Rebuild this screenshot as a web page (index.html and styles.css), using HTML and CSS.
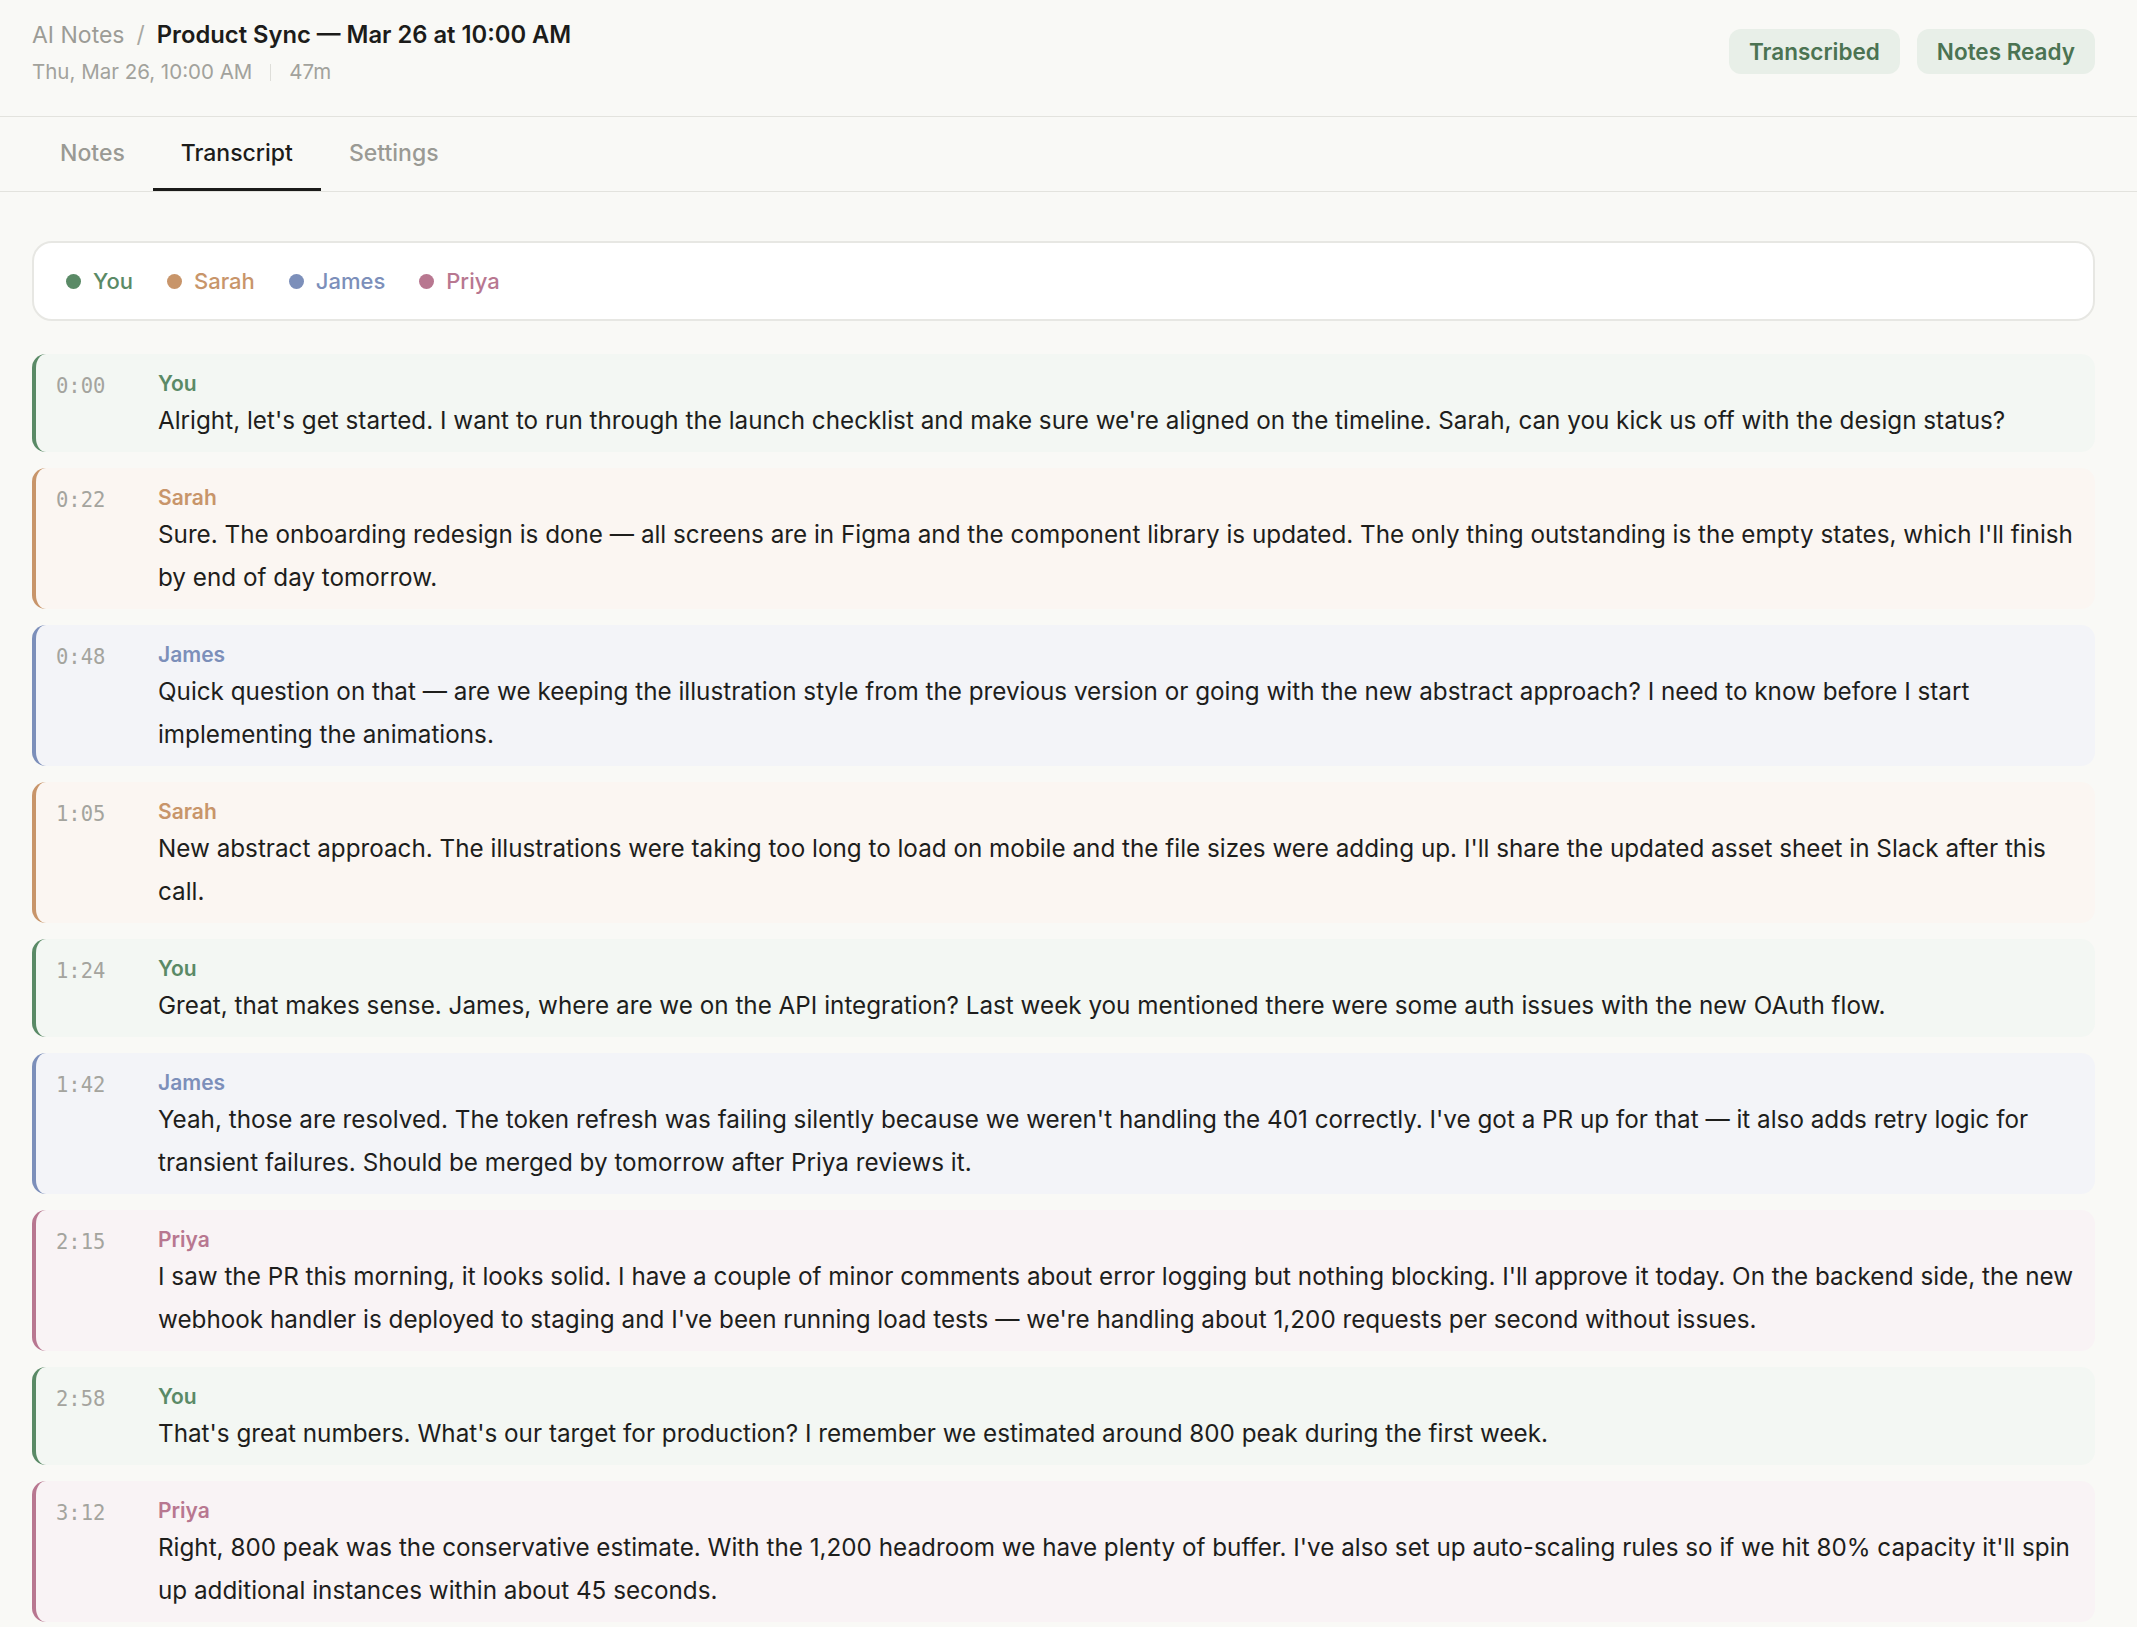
FILE: index.html
```html
<!DOCTYPE html>
<html lang="en">
<head>
<meta charset="utf-8">
<title>Product Sync — Transcript</title>
<link rel="stylesheet" href="styles.css">
</head>
<body>
<div class="app">
  <header class="header">
    <div class="header-left">
      <div class="crumbs">
        <span class="crumb-root">AI Notes</span>
        <span class="crumb-sep">/</span>
        <span class="crumb-title">Product Sync — Mar 26 at 10:00 AM</span>
      </div>
      <div class="meta">
        <span>Thu, Mar 26, 10:00 AM</span>
        <span class="meta-sep"></span>
        <span>47m</span>
      </div>
    </div>
    <div class="badges">
      <span class="badge">Transcribed</span>
      <span class="badge">Notes Ready</span>
    </div>
  </header>

  <nav class="tabs">
    <span class="tab">Notes</span>
    <span class="tab tab-active">Transcript</span>
    <span class="tab">Settings</span>
  </nav>

  <main class="main">
    <div class="legend">
      <span class="legend-item sp-you"><span class="dot"></span>You</span>
      <span class="legend-item sp-sarah"><span class="dot"></span>Sarah</span>
      <span class="legend-item sp-james"><span class="dot"></span>James</span>
      <span class="legend-item sp-priya"><span class="dot"></span>Priya</span>
    </div>

    <div class="segments">
      <div class="segment sp-you">
        <div class="time">0:00</div>
        <div class="seg-body"><div class="speaker">You</div><p class="text">Alright, let's get started. I want to run through the launch checklist and make sure we're aligned on the timeline. Sarah, can you kick us off with the design status?</p></div>
      </div>
      <div class="segment sp-sarah">
        <div class="time">0:22</div>
        <div class="seg-body"><div class="speaker">Sarah</div><p class="text">Sure. The onboarding redesign is done — all screens are in Figma and the component library is updated. The only thing outstanding is the empty states, which I'll finish by end of day tomorrow.</p></div>
      </div>
      <div class="segment sp-james">
        <div class="time">0:48</div>
        <div class="seg-body"><div class="speaker">James</div><p class="text">Quick question on that — are we keeping the illustration style from the previous version or going with the new abstract approach? I need to know before I start implementing the animations.</p></div>
      </div>
      <div class="segment sp-sarah">
        <div class="time">1:05</div>
        <div class="seg-body"><div class="speaker">Sarah</div><p class="text">New abstract approach. The illustrations were taking too long to load on mobile and the file sizes were adding up. I'll share the updated asset sheet in Slack after this call.</p></div>
      </div>
      <div class="segment sp-you">
        <div class="time">1:24</div>
        <div class="seg-body"><div class="speaker">You</div><p class="text">Great, that makes sense. James, where are we on the API integration? Last week you mentioned there were some auth issues with the new OAuth flow.</p></div>
      </div>
      <div class="segment sp-james">
        <div class="time">1:42</div>
        <div class="seg-body"><div class="speaker">James</div><p class="text">Yeah, those are resolved. The token refresh was failing silently because we weren't handling the 401 correctly. I've got a PR up for that — it also adds retry logic for transient failures. Should be merged by tomorrow after Priya reviews it.</p></div>
      </div>
      <div class="segment sp-priya">
        <div class="time">2:15</div>
        <div class="seg-body"><div class="speaker">Priya</div><p class="text">I saw the PR this morning, it looks solid. I have a couple of minor comments about error logging but nothing blocking. I'll approve it today. On the backend side, the new webhook handler is deployed to staging and I've been running load tests — we're handling about 1,200 requests per second without issues.</p></div>
      </div>
      <div class="segment sp-you">
        <div class="time">2:58</div>
        <div class="seg-body"><div class="speaker">You</div><p class="text">That's great numbers. What's our target for production? I remember we estimated around 800 peak during the first week.</p></div>
      </div>
      <div class="segment sp-priya">
        <div class="time">3:12</div>
        <div class="seg-body"><div class="speaker">Priya</div><p class="text">Right, 800 peak was the conservative estimate. With the 1,200 headroom we have plenty of buffer. I've also set up auto-scaling rules so if we hit 80% capacity it'll spin up additional instances within about 45 seconds.</p></div>
      </div>
    </div>
  </main>
</div>
</body>
</html>
```

FILE: styles.css
```css
* { box-sizing: border-box; }

body {
  margin: 0;
  background: #f9f9f6;
  color: #1e1e1c;
  font-family: Inter, "Noto Sans", sans-serif;
}

.header {
  display: flex;
  justify-content: space-between;
  align-items: center;
  padding: 18px 42px 30px 32px;
  border-bottom: 1px solid #e3e3de;
}

.crumbs {
  display: flex;
  align-items: baseline;
  font-size: 23px;
  line-height: 34px;
}
.crumb-root { color: #9c9c96; }
.crumb-sep { color: #a8a8a2; margin: 0 12px; }
.crumb-title { font-size: 23.75px; font-weight: 600; color: #1c1c1a; }

.meta {
  display: flex;
  align-items: center;
  margin-top: 6px;
  font-size: 20.5px;
  line-height: 28px;
  color: #a2a29c;
}
.meta-sep {
  width: 1px;
  height: 17px;
  background: #deded9;
  margin: 0 18px;
}

.badges { display: flex; gap: 17px; margin-top: -2px; }
.badge {
  display: flex;
  align-items: center;
  height: 45px;
  padding: 0 20px;
  border-radius: 12px;
  background: #e8efe8;
  color: #4b7352;
  font-size: 22.5px;
  font-weight: 600;
}

.tabs {
  display: flex;
  height: 75px;
  padding: 0 42px 0 32px;
  border-bottom: 1px solid #e3e3de;
}
.tab {
  display: flex;
  align-items: center;
  padding: 0 28px;
  border-bottom: 3px solid transparent;
  font-size: 23px;
  font-weight: 500;
  color: #9a9a94;
}
.tab-active {
  color: #1c1c1a;
  border-bottom-color: #1c1c1a;
}

.main { padding: 49px 42px 40px 32px; }

.legend {
  display: flex;
  align-items: center;
  gap: 34px;
  height: 80px;
  padding: 0 32px;
  background: #ffffff;
  border: 2px solid #e7e7e3;
  border-radius: 20px;
}
.legend-item {
  display: flex;
  align-items: center;
  gap: 12px;
  font-size: 22px;
  font-weight: 500;
}
.dot {
  width: 15px;
  height: 15px;
  border-radius: 50%;
  background: currentColor;
}

.sp-you { color: #5a8a66; }
.sp-sarah { color: #c8956a; }
.sp-james { color: #7c8fba; }
.sp-priya { color: #b87790; }

.segments {
  display: flex;
  flex-direction: column;
  gap: 16px;
  margin-top: 33px;
}
.segment {
  display: flex;
  gap: 20px;
  padding: 15px 10px 10px 20px;
  border-left: 4px solid currentColor;
  border-radius: 14px;
}
.segment.sp-you { background: #f3f7f3; }
.segment.sp-sarah { background: #fbf6f2; }
.segment.sp-james { background: #f3f4f8; }
.segment.sp-priya { background: #f9f3f5; }

.time {
  flex: 0 0 82px;
  padding-top: 4px;
  font-family: "DejaVu Sans Mono", "Liberation Mono", monospace;
  font-size: 20.5px;
  line-height: 27px;
  color: #a4a49e;
}
.seg-body { flex: 1; min-width: 0; }
.speaker {
  font-size: 21px;
  font-weight: 600;
  line-height: 30px;
}
.text {
  margin: 0;
  font-size: 24.25px;
  line-height: 43px;
  color: #1e1e1c;
}
```
